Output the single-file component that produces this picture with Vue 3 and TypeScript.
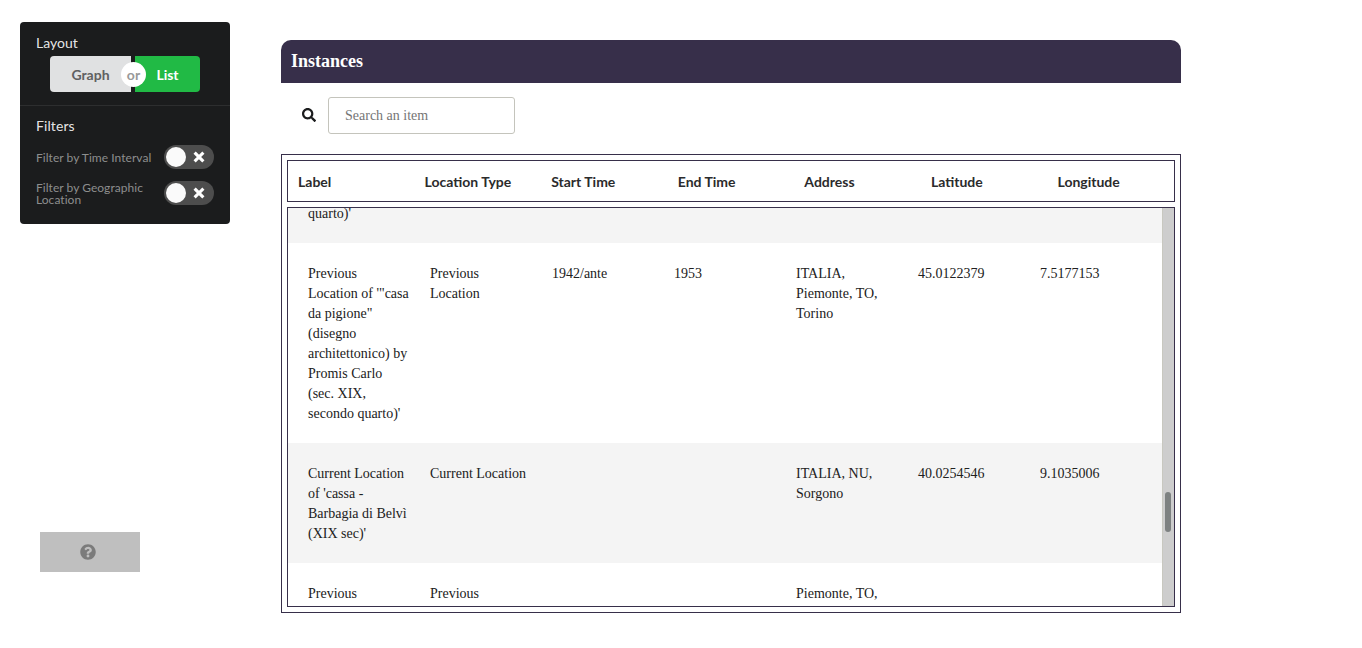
<script setup lang="ts">
import { ref } from 'vue'

interface Instance {
  label: string
  type: string
  start: string
  end: string
  address: string
  latitude: string
  longitude: string
}

const headers: string[] = ['Label', 'Location Type', 'Start Time', 'End Time', 'Address', 'Latitude', 'Longitude']
const filters: string[] = ['Filter by Time Interval', 'Filter by Geographic Location']
const search = ref('')

const instances: Instance[] = [
  { label: "quarto)'", type: '', start: '', end: '', address: '', latitude: '', longitude: '' },
  {
    label: "Previous\nLocation of '\"casa\nda pigione\"\n(disegno\narchitettonico) by\nPromis Carlo\n(sec. XIX,\nsecondo quarto)'",
    type: 'Previous\nLocation',
    start: '1942/ante',
    end: '1953',
    address: 'ITALIA,\nPiemonte, TO,\nTorino',
    latitude: '45.0122379',
    longitude: '7.5177153',
  },
  {
    label: "Current Location\nof 'cassa -\nBarbagia di Belvì\n(XIX sec)'",
    type: 'Current Location',
    start: '',
    end: '',
    address: 'ITALIA, NU,\nSorgono',
    latitude: '40.0254546',
    longitude: '9.1035006',
  },
  {
    label: 'Previous',
    type: 'Previous',
    start: '',
    end: '',
    address: 'Piemonte, TO,',
    latitude: '',
    longitude: '',
  },
]
</script>

<template>
  <div class="page">
    <aside class="side">
      <div class="menu">
        <section class="layout">
          <div class="heading">Layout</div>
          <div class="buttons">
            <button class="btn graph">Graph</button>
            <span class="or">or</span>
            <button class="btn list">List</button>
          </div>
        </section>
        <section class="filters">
          <div class="heading">Filters</div>
          <div v-for="f in filters" :key="f" class="filter">
            <span class="filter-name">{{ f }}</span>
            <span class="toggle">
              <span class="knob"></span>
              <svg class="cross" viewBox="0 0 12 12" width="12" height="12">
                <path d="M2.700 2.700L9.300 9.300M9.300 2.700L2.700 9.300" stroke="#fff" stroke-width="3.1" stroke-linecap="square" />
              </svg>
            </span>
          </div>
        </section>
      </div>
      <button class="help">
        <svg viewBox="0 0 512 512" width="16" height="16">
          <path fill="#7b7b7b" d="M504 256c0 137-111 248-248 248S8 393 8 256C8 119.100 119 8 256 8s248 111.100 248 248zM262.700 90c-54.500 0-89.300 23-116.500 63.800-3.500 5.300-2.400 12.400 2.700 16.300l34.700 26.300c5.200 3.900 12.600 3 16.700-2.100 17.900-22.700 30.100-35.800 57.300-35.800 20.400 0 45.700 13.100 45.700 33 0 15-12.400 22.700-32.500 34C247.100 238.500 216 254.900 216 296v4c0 6.600 5.400 12 12 12h56c6.600 0 12-5.400 12-12v-1.300c0-28.500 83.200-29.600 83.200-106.700 0-58-60.200-102-116.500-102zM256 338c-25.400 0-46 20.600-46 46s20.600 46 46 46 46-20.600 46-46-20.600-46-46-46z" />
        </svg>
      </button>
    </aside>

    <main class="content">
      <h3 class="title">Instances</h3>
      <div class="search">
        <svg viewBox="0 0 512 512" width="14" height="14">
          <path fill="#1b1c1d" d="M505 442.700L405.300 343c-4.500-4.500-10.600-7-17-7H372c27.600-35.300 44-79.700 44-128C416 93.100 322.900 0 208 0S0 93.100 0 208s93.100 208 208 208c48.300 0 92.700-16.400 128-44v16.300c0 6.400 2.500 12.500 7 17l99.700 99.700c9.400 9.400 24.600 9.400 33.900 0l28.300-28.300c9.400-9.400 9.400-24.600.1-34zM208 336c-70.700 0-128-57.200-128-128 0-70.700 57.200-128 128-128 70.700 0 128 57.200 128 128 0 70.700-57.200 128-128 128z" />
        </svg>
        <input v-model="search" type="text" placeholder="Search an item" />
      </div>
      <div class="table">
        <div class="thead">
          <div v-for="h in headers" :key="h" class="th">{{ h }}</div>
        </div>
        <div class="tbody">
          <div class="rows">
            <div v-for="(r, i) in instances" :key="i" class="row">
              <div class="td">{{ r.label }}</div>
              <div class="td">{{ r.type }}</div>
              <div class="td">{{ r.start }}</div>
              <div class="td">{{ r.end }}</div>
              <div class="td">{{ r.address }}</div>
              <div class="td">{{ r.latitude }}</div>
              <div class="td">{{ r.longitude }}</div>
            </div>
          </div>
          <div class="track"><div class="thumb"></div></div>
        </div>
      </div>
    </main>
  </div>
</template>

<style>
body {
  margin: 0;
  background: #fff;
}
</style>

<style scoped>
* {
  box-sizing: border-box;
}
.page {
  display: flex;
  height: 648px;
  overflow: hidden;
  font-family: Lato, 'Liberation Sans', sans-serif;
  font-size: 14px;
}
.side {
  width: 210px;
  margin: 22px 51px 0 20px;
}
.menu {
  height: 202px;
  background: #1b1c1d;
  border-radius: 4px;
}
.layout {
  height: 84px;
  padding: 12px 16px 0;
  border-bottom: 1px solid #2d2e2f;
}
.heading {
  height: 17px;
  line-height: 17px;
  color: rgba(255, 255, 255, 0.9);
}
.layout .heading {
  margin-bottom: 5px;
}
.buttons {
  position: relative;
  display: flex;
  justify-content: space-between;
  width: 150px;
  height: 36px;
  margin-left: 14px;
}
.btn {
  height: 36px;
  padding: 2px 0 0;
  border: 0;
  font: bold 14px/34px Lato, sans-serif;
}
.graph {
  width: 81px;
  background: #e0e1e2;
  color: #5f6061;
  border-radius: 4px 0 0 4px;
}
.list {
  width: 65px;
  background: #21ba45;
  color: #fff;
  border-radius: 0 4px 4px 0;
}
.or {
  position: absolute;
  left: 71px;
  top: 6px;
  width: 25px;
  height: 25px;
  border-radius: 50%;
  background: #fff;
  color: #999;
  font-weight: bold;
  line-height: 26px;
  text-align: center;
}
.filters {
  padding: 11px 16px 0;
}
.filter {
  display: flex;
  justify-content: space-between;
  align-items: center;
  height: 24px;
  margin-bottom: 12px;
}
.filters .heading {
  margin-bottom: 11px;
  letter-spacing: 0.1px;
}
.filter-name {
  width: 120px;
  font-size: 12px;
  line-height: 12px;
  letter-spacing: 0.04px;
  color: #8d8e8e;
  padding-top: 2px;
}
.toggle {
  display: flex;
  align-items: center;
  width: 50px;
  height: 24px;
  padding-left: 2px;
  border-radius: 12px;
  background: #4d4d4d;
}
.knob {
  width: 20px;
  height: 20px;
  border-radius: 50%;
  background: #fafafa;
}
.cross {
  margin-left: 7px;
}
.help {
  display: flex;
  align-items: center;
  width: 100px;
  height: 40px;
  margin: 308px 0 0 20px;
  padding: 0 0 0 40px;
  border: 0;
  background: #bfbfbf;
}
.content {
  width: 900px;
  padding-top: 40px;
  font-family: 'Liberation Serif', serif;
  color: #212121;
}
.title {
  height: 43px;
  margin: 0;
  padding-left: 10px;
  border-radius: 10px 10px 0 0;
  background: #372f4a;
  color: #fff;
  font-size: 18px;
  line-height: 42px;
}
.search {
  display: flex;
  align-items: center;
  gap: 12px;
  height: 71px;
  padding: 0 0 7px 21px;
}
.search input {
  width: 187px;
  height: 37px;
  padding: 2px 16px 0;
  border: 1px solid #c4c4bc;
  border-radius: 3px;
  outline: 0;
  font: 14px 'Liberation Serif', serif;
}
.search input::placeholder {
  color: #757575;
}
.table {
  height: 459px;
  padding: 5px;
  border: 1px solid #372f4a;
}
.thead {
  display: flex;
  height: 42px;
  margin-bottom: 5px;
  border: 1px solid #372f4a;
}
.th {
  flex: 1 1 0;
  padding-left: 10px;
  font: bold 14px/42px Lato, sans-serif;
  color: #2b2b2c;
}
.tbody {
  display: flex;
  height: 400px;
  border: 1px solid #372f4a;
  overflow: hidden;
}
.rows {
  width: 874px;
  margin-top: -5px;
}
.row {
  display: flex;
  padding: 21px 20px 19px 0;
}
.row:first-child {
  padding-top: 1px;
}
.row:nth-child(odd) {
  background: #f4f4f4;
}
.td {
  width: 122px;
  padding-left: 20px;
  line-height: 20px;
  white-space: pre;
}
.track {
  width: 12px;
  padding: 284px 0 0 2px;
  border-left: 1px solid #c8c8c0;
  background: #cdcdcd;
}
.thumb {
  width: 6px;
  height: 40px;
  border-radius: 3px;
  background: #7d8181;
}
</style>
